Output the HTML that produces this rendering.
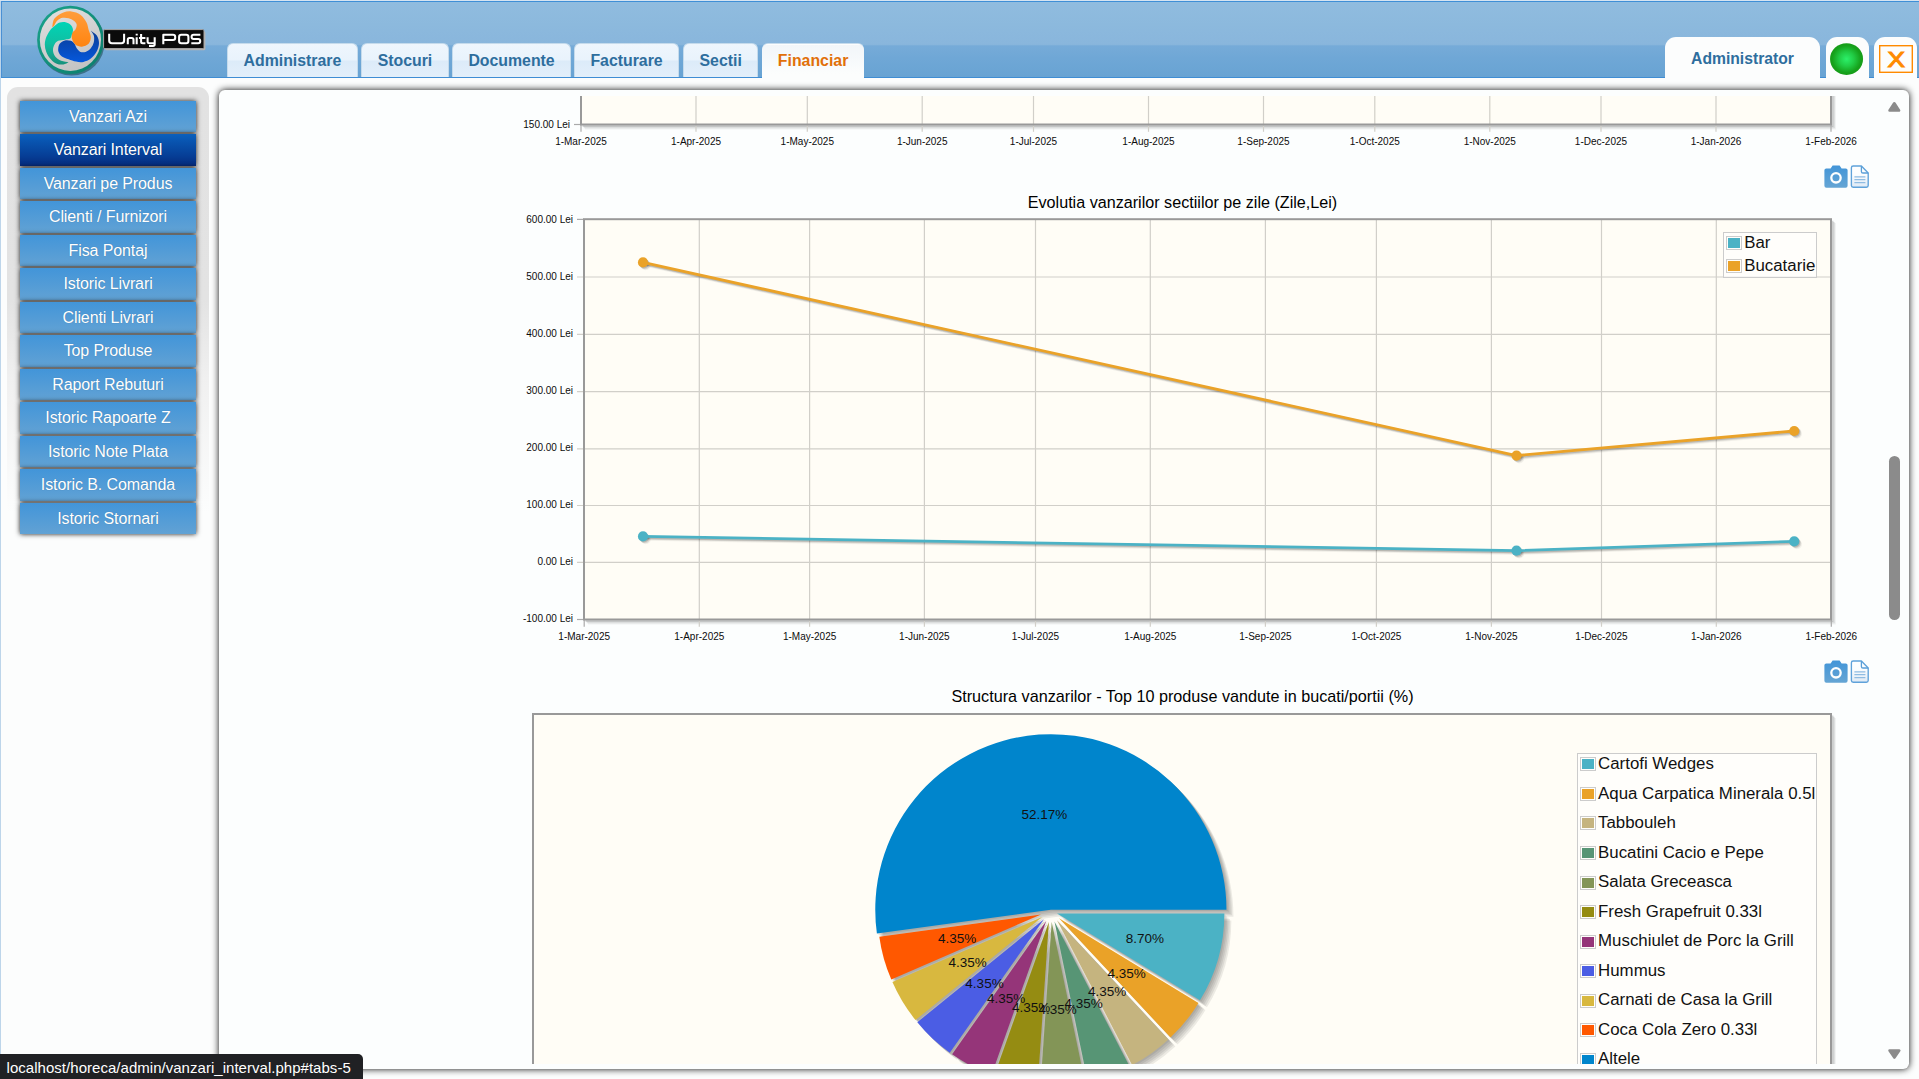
<!DOCTYPE html>
<html><head><meta charset="utf-8"><title>Unity POS</title>
<style>
html,body{margin:0;padding:0}
body{width:1919px;height:1079px;overflow:hidden;position:relative;background:#fcfdfd;font-family:"Liberation Sans", sans-serif;}
#lb{position:absolute;left:0;top:0;width:1px;height:1079px;background:#bdd5ea}
#hdr{position:absolute;left:1px;top:1px;width:1918px;height:76px;border-left:1px solid #4a90d4;border-top:1px solid #3f8fd6;box-sizing:border-box;
 background:linear-gradient(to bottom,#90bcdf 0%,#8cb9dd 30%,#89b6dc 56.5%,#76abd8 58.5%,#6fa7d6 75%,#68a3d3 100%);}
#tb{position:absolute;left:0;top:0;width:1919px;height:1px;background:#d6e4f1}
#hline{position:absolute;left:1px;top:77px;width:1918px;height:1.3px;background:#3f8dd4}
.tab{position:absolute;top:43px;height:34px;box-sizing:border-box;border:1px solid #c5dbec;border-bottom:none;border-radius:6px 6px 0 0;
 background:linear-gradient(to bottom,#eef6fd 0%,#e9f3fc 48%,#dcebf9 52%,#e3effa 100%);color:#2e6e9e;font-weight:bold;font-size:15.85px;text-align:center;line-height:33px;white-space:nowrap}
.tab.on{top:44px;background:linear-gradient(to bottom,#f2f6f9 0%,#f6f9fb 40%,#fcfdfd 85%);color:#e17009;height:34.5px;border-color:transparent;line-height:31px}
.rt{position:absolute;top:37px;height:41.5px;background:#fcfdfd;border-radius:11px 11px 0 0}
#adm{left:1665px;width:155px;color:#2e6e9e;font-weight:bold;font-size:15.7px;text-align:center;line-height:43px}
#side{position:absolute;left:7px;top:87px;width:202px;height:560px;border-radius:11px 11px 0 0;
 background:linear-gradient(to bottom,#e2e2e2 0%,#e3e3e3 38%,#f0f0f0 52%,#fcfdfd 76%)}
.sb{position:absolute;left:20px;width:176px;height:31.4px;background:linear-gradient(to bottom,#4295d9,#62a2d4);color:#fff;font-size:16px;text-align:center;line-height:31px;
 box-shadow:0 0 5px rgba(0,0,0,.9);text-shadow:0 0 1px rgba(0,0,0,.25);white-space:nowrap;letter-spacing:-0.1px}
.sb.act{background:linear-gradient(to bottom,#0a60bd,#063d95 70%,#052b7d)}
#panel{position:absolute;left:219px;top:90px;width:1690px;height:979px;background:#fcfefe;border-radius:5.8px;box-shadow:0 0 7px rgba(0,0,0,.95)}
#scroll{position:absolute;left:225px;top:96px;width:1678px;height:968px;overflow:hidden}
#scroll svg.main{position:absolute;left:-225px;top:-96px}
.tk{font-size:10px;fill:#0c0c0c;font-family:"Liberation Sans", sans-serif}
.dl{font-size:13.5px;fill:#111;font-family:"Liberation Sans", sans-serif}
.ttl{position:absolute;font-size:16.15px;color:#000;white-space:nowrap;transform:translateX(-50%)}
.leg{position:absolute;border:1px solid #ccc;background:rgba(255,255,255,.6);box-sizing:border-box}
.lr{position:absolute;left:2px;height:22px;white-space:nowrap}
.sw{position:absolute;left:-0.6px;top:3.4px;width:12px;height:10px;border:1px solid #ccc;padding:1px;background:transparent}
.sw i{display:block;width:12px;height:10px}
.lt{position:absolute;left:17.9px;top:0;font-size:16.85px;line-height:19px;color:#111}
.ico{position:absolute}
#thumb{position:absolute;left:1889px;top:456px;width:10.5px;height:164px;border-radius:5.5px;background:#8b8b8b}
#status{position:absolute;left:0;top:1054px;width:363px;height:25px;background:#202124;border-top-right-radius:5px;color:#fff;font-size:15px;line-height:27px;padding-left:6.6px;box-sizing:border-box;white-space:nowrap;letter-spacing:0.03px}
</style></head><body>
<div id="lb"></div>
<div id="hdr"></div><div id="tb"></div>
<div class="tab" style="left:227.3px;width:130.3px">Administrare</div><div class="tab" style="left:361.3px;width:87.3px">Stocuri</div><div class="tab" style="left:452.4px;width:118.3px">Documente</div><div class="tab" style="left:574.4px;width:104.3px">Facturare</div><div class="tab" style="left:683.2px;width:75.0px">Sectii</div><div class="tab" style="left:762.2px;width:101.8px">Financiar</div>
<div id="hline"></div>
<div class="tab on" style="left:762.2px;width:101.8px">Financiar</div>
<div class="rt" id="adm">Administrator</div>
<div class="rt" style="left:1826px;width:43px"></div>
<div class="rt" style="left:1874px;width:43px"></div>
<svg style="position:absolute;left:1820px;top:36px" width="99" height="44" viewBox="1820 36 99 44">
 <defs><radialGradient id="gg" cx="0.5" cy="0.5" r="0.5"><stop offset="0" stop-color="#2cf06a"/><stop offset="0.45" stop-color="#21cc45"/><stop offset="0.85" stop-color="#16a21c"/><stop offset="1" stop-color="#169c18"/></radialGradient></defs>
 <ellipse cx="1846.55" cy="59.05" rx="16.5" ry="15.9" fill="url(#gg)"/>
 <rect x="1879.7" y="45.7" width="32.6" height="26.6" fill="none" stroke="#ff8a00" stroke-width="1.4"/>
 <text x="1887.4" y="66.95" font-family='"Liberation Sans", sans-serif' font-size="22.3" fill="#ff8a00" stroke="#ff8a00" stroke-width="1.05" stroke-linejoin="miter" textLength="17.4" lengthAdjust="spacingAndGlyphs">X</text>
</svg>
<!-- logo -->
<svg style="position:absolute;left:30px;top:0" width="185" height="80" viewBox="30 0 185 80">
 <defs>
  <linearGradient id="lg1" x1="0.3" y1="0" x2="0.7" y2="1"><stop offset="0" stop-color="#dedede"/><stop offset="1" stop-color="#c2c2c2"/></linearGradient>
  <linearGradient id="rg1" x1="0" y1="0" x2="1" y2="1"><stop offset="0" stop-color="#1ba48c"/><stop offset="1" stop-color="#0a7c6b"/></linearGradient>
  <linearGradient id="og" x1="0" y1="0" x2="0" y2="1"><stop offset="0" stop-color="#ff9d3c"/><stop offset="1" stop-color="#ff8410"/></linearGradient>
  <linearGradient id="tg" x1="0" y1="0" x2="0" y2="1"><stop offset="0" stop-color="#00d4b6"/><stop offset="0.5" stop-color="#10bfa2"/><stop offset="1" stop-color="#17917c"/></linearGradient>
  <linearGradient id="bg2" x1="0" y1="0" x2="0" y2="1"><stop offset="0" stop-color="#0a3c96"/><stop offset="0.45" stop-color="#0848b4"/><stop offset="1" stop-color="#0558dc"/></linearGradient>
 </defs>
 <ellipse cx="71.6" cy="41.8" rx="33.2" ry="33.8" fill="#03342c" fill-opacity=".45"/>
 <ellipse cx="70.4" cy="39.9" rx="33.3" ry="34.2" fill="url(#rg1)"/>
 <ellipse cx="70.4" cy="39.7" rx="30.6" ry="31.2" fill="url(#lg1)"/>
 <path d="M90.80 30.40 C91.80 31.27 95.43 33.50 96.80 35.60 C98.17 37.70 99.00 40.40 99.00 43.00 C99.00 45.60 98.17 48.60 96.80 51.20 C95.43 53.80 93.03 56.82 90.80 58.60 C88.57 60.38 85.87 61.40 83.40 61.90 C80.93 62.40 78.47 62.03 76.00 61.60 C73.53 61.17 70.95 60.17 68.60 59.30 C66.25 58.43 63.52 57.50 61.90 56.40 C60.28 55.30 59.52 53.93 58.90 52.70 C58.28 51.47 58.07 50.48 58.20 49.00 C58.33 47.52 58.58 45.23 59.70 43.80 C60.82 42.37 63.05 40.90 64.90 40.40 C66.75 39.90 69.20 40.23 70.80 40.80 C72.40 41.37 73.52 42.57 74.50 43.80 C75.48 45.03 75.72 46.85 76.70 48.20 C77.68 49.55 78.92 51.28 80.40 51.90 C81.88 52.52 83.87 52.52 85.60 51.90 C87.33 51.28 89.43 49.80 90.80 48.20 C92.17 46.60 93.30 44.40 93.80 42.30 C94.30 40.20 94.30 37.58 93.80 35.60 C93.30 33.62 91.30 31.27 90.80 30.40 Z" fill="url(#bg2)"/>
 <path d="M52.30 26.70 C52.67 25.33 52.65 20.85 54.50 18.50 C56.35 16.15 60.57 13.77 63.40 12.60 C66.23 11.43 68.67 11.13 71.50 11.50 C74.33 11.87 77.92 13.00 80.40 14.80 C82.88 16.60 85.03 19.82 86.40 22.30 C87.77 24.78 87.87 27.23 88.60 29.70 C89.33 32.17 90.80 34.75 90.80 37.10 C90.80 39.45 90.08 42.20 88.60 43.80 C87.12 45.40 84.12 46.58 81.90 46.70 C79.68 46.82 76.97 45.85 75.30 44.50 C73.63 43.15 72.40 40.58 71.90 38.60 C71.40 36.62 71.73 34.08 72.30 32.60 C72.87 31.12 74.57 31.05 75.30 29.70 C76.03 28.35 76.95 25.98 76.70 24.50 C76.45 23.02 75.15 21.85 73.80 20.80 C72.45 19.75 70.47 18.70 68.60 18.20 C66.73 17.70 64.47 17.43 62.60 17.80 C60.73 18.17 58.90 18.98 57.40 20.40 C55.90 21.82 54.45 25.25 53.60 26.30 C52.75 27.35 52.52 26.63 52.30 26.70 Z" fill="url(#og)"/>
 <path d="M68.60 62.30 C67.73 62.67 65.38 64.25 63.40 64.50 C61.42 64.75 58.80 64.67 56.70 63.80 C54.60 62.93 52.53 61.28 50.80 59.30 C49.07 57.32 47.30 54.37 46.30 51.90 C45.30 49.43 44.80 46.97 44.80 44.50 C44.80 42.03 45.43 39.45 46.30 37.10 C47.17 34.75 48.63 32.25 50.00 30.40 C51.37 28.55 52.88 27.30 54.50 26.00 C56.12 24.70 57.85 23.22 59.70 22.60 C61.55 21.98 63.75 21.92 65.60 22.30 C67.45 22.68 69.57 23.67 70.80 24.90 C72.03 26.13 72.88 27.92 73.00 29.70 C73.12 31.48 71.98 34.12 71.50 35.60 C71.02 37.08 71.20 37.92 70.10 38.60 C69.00 39.28 66.88 39.33 64.90 39.70 C62.92 40.07 59.93 40.00 58.20 40.80 C56.47 41.60 55.37 42.90 54.50 44.50 C53.63 46.10 52.88 48.42 53.00 50.40 C53.12 52.38 53.83 54.67 55.20 56.40 C56.57 58.13 58.97 59.82 61.20 60.80 C63.43 61.78 67.37 62.05 68.60 62.30 Z" fill="url(#tg)"/>
 <rect x="105" y="31.2" width="100.4" height="19" rx="1.5" fill="#b4b4b4"/>
 <rect x="103.6" y="29.6" width="100.4" height="19" rx="1.2" fill="#0b0b0b" stroke="#a6a6a6" stroke-width="1"/>
 <g fill="none" stroke="#fff" stroke-width="2.05" stroke-linecap="butt" stroke-linejoin="round">
  <path d="M109.2 33.8 V40.6 Q109.2 43.3 111.9 43.3 H121.4 Q124.1 43.3 124.1 40.6 V33.8"/>
  <path d="M127.8 44.2 V39.7 Q127.8 38 129.5 38 H131.8 Q133.5 38 133.5 39.7 V44.2"/>
  <path d="M136.7 37.2 V44.2 M136.7 33.8 V35.6"/>
  <path d="M141.1 34 V41.8 Q141.1 43.3 142.7 43.3 H145.4 M139 37.9 H145.4"/>
  <path d="M147.6 37.2 V41.6 Q147.6 43.3 149.3 43.3 H154.7 M154.7 37.2 V44.3 Q154.7 46 153 46 H149"/>
  <path d="M163.3 44.2 V34.7 H173 Q175.2 34.7 175.2 36.9 V37.7 Q175.2 39.9 173 39.9 H163.3"/>
  <path d="M181.3 34.7 H186.2 Q188.4 34.7 188.4 36.9 V41.1 Q188.4 43.3 186.2 43.3 H181.3 Q179.1 43.3 179.1 41.1 V36.9 Q179.1 34.7 181.3 34.7 Z"/>
  <path d="M200.4 34.7 H193.6 Q191.6 34.7 191.6 36.7 V37 Q191.6 39 193.6 39 H198.2 Q200.2 39 200.2 41 V41.3 Q200.2 43.3 198.2 43.3 H191.3"/>
 </g>
</svg>
<div id="side"></div>
<div class="sb" style="top:100.8px">Vanzari Azi</div><div class="sb act" style="top:134.3px">Vanzari Interval</div><div class="sb" style="top:167.8px">Vanzari pe Produs</div><div class="sb" style="top:201.3px">Clienti / Furnizori</div><div class="sb" style="top:234.8px">Fisa Pontaj</div><div class="sb" style="top:268.3px">Istoric Livrari</div><div class="sb" style="top:301.8px">Clienti Livrari</div><div class="sb" style="top:335.3px">Top Produse</div><div class="sb" style="top:368.8px">Raport Rebuturi</div><div class="sb" style="top:402.3px">Istoric Rapoarte Z</div><div class="sb" style="top:435.8px">Istoric Note Plata</div><div class="sb" style="top:469.3px">Istoric B. Comanda</div><div class="sb" style="top:502.8px">Istoric Stornari</div>
<div id="panel"></div>
<div id="scroll">
<svg class="main" width="1919" height="1079" viewBox="0 0 1919 1079">
<rect x="581.0" y="90" width="1250.0" height="34.5" fill="#fffdf6"/>
<path d="M582.5 126.0 H1832.5 V90.0" fill="none" stroke="#000" stroke-opacity="0.16" stroke-width="2"/>
<path d="M583.7 127.2 H1833.7 V90.0" fill="none" stroke="#000" stroke-opacity="0.1" stroke-width="2"/>
<path d="M584.9 128.4 H1834.9 V90.0" fill="none" stroke="#000" stroke-opacity="0.05" stroke-width="2"/>
<line x1="581.0" y1="124.5" x2="581.0" y2="131.8" stroke="#aaa" stroke-width="1.2"/>
<line x1="696.0" y1="90" x2="696.0" y2="131.8" stroke="#d1cfc9" stroke-width="1.2"/>
<line x1="807.3" y1="90" x2="807.3" y2="131.8" stroke="#d1cfc9" stroke-width="1.2"/>
<line x1="922.2" y1="90" x2="922.2" y2="131.8" stroke="#d1cfc9" stroke-width="1.2"/>
<line x1="1033.5" y1="90" x2="1033.5" y2="131.8" stroke="#d1cfc9" stroke-width="1.2"/>
<line x1="1148.5" y1="90" x2="1148.5" y2="131.8" stroke="#d1cfc9" stroke-width="1.2"/>
<line x1="1263.5" y1="90" x2="1263.5" y2="131.8" stroke="#d1cfc9" stroke-width="1.2"/>
<line x1="1374.8" y1="90" x2="1374.8" y2="131.8" stroke="#d1cfc9" stroke-width="1.2"/>
<line x1="1489.8" y1="90" x2="1489.8" y2="131.8" stroke="#d1cfc9" stroke-width="1.2"/>
<line x1="1601.0" y1="90" x2="1601.0" y2="131.8" stroke="#d1cfc9" stroke-width="1.2"/>
<line x1="1716.0" y1="90" x2="1716.0" y2="131.8" stroke="#d1cfc9" stroke-width="1.2"/>
<line x1="1831.0" y1="124.5" x2="1831.0" y2="131.8" stroke="#aaa" stroke-width="1.2"/>
<line x1="574.0" y1="124.5" x2="581.0" y2="124.5" stroke="#aaa" stroke-width="1.2"/>
<path d="M581.0 90 V124.5 H1831.0 V90" fill="none" stroke="#999999" stroke-width="2"/>
<text x="581.0" y="145.15" text-anchor="middle" class="tk">1-Mar-2025</text>
<text x="696.0" y="145.15" text-anchor="middle" class="tk">1-Apr-2025</text>
<text x="807.3" y="145.15" text-anchor="middle" class="tk">1-May-2025</text>
<text x="922.2" y="145.15" text-anchor="middle" class="tk">1-Jun-2025</text>
<text x="1033.5" y="145.15" text-anchor="middle" class="tk">1-Jul-2025</text>
<text x="1148.5" y="145.15" text-anchor="middle" class="tk">1-Aug-2025</text>
<text x="1263.5" y="145.15" text-anchor="middle" class="tk">1-Sep-2025</text>
<text x="1374.8" y="145.15" text-anchor="middle" class="tk">1-Oct-2025</text>
<text x="1489.8" y="145.15" text-anchor="middle" class="tk">1-Nov-2025</text>
<text x="1601.0" y="145.15" text-anchor="middle" class="tk">1-Dec-2025</text>
<text x="1716.0" y="145.15" text-anchor="middle" class="tk">1-Jan-2026</text>
<text x="1831.0" y="145.15" text-anchor="middle" class="tk">1-Feb-2026</text>
<text x="570" y="128" text-anchor="end" class="tk">150.00 Lei</text>
<rect x="584.0" y="219.2" width="1247.0" height="400.3" fill="#fffdf6"/>
<path d="M585.5 621.0 H1832.5 V220.7" fill="none" stroke="#000" stroke-opacity="0.16" stroke-width="2"/>
<path d="M586.7 622.2 H1833.7 V221.9" fill="none" stroke="#000" stroke-opacity="0.1" stroke-width="2"/>
<path d="M587.9 623.4 H1834.9 V223.1" fill="none" stroke="#000" stroke-opacity="0.05" stroke-width="2"/>
<line x1="584.2" y1="619.5" x2="584.2" y2="626.8" stroke="#aaa" stroke-width="1.2"/>
<line x1="699.3" y1="219.2" x2="699.3" y2="626.8" stroke="#d1cfc9" stroke-width="1.2"/>
<line x1="809.6" y1="219.2" x2="809.6" y2="626.8" stroke="#d1cfc9" stroke-width="1.2"/>
<line x1="924.4" y1="219.2" x2="924.4" y2="626.8" stroke="#d1cfc9" stroke-width="1.2"/>
<line x1="1035.5" y1="219.2" x2="1035.5" y2="626.8" stroke="#d1cfc9" stroke-width="1.2"/>
<line x1="1150.3" y1="219.2" x2="1150.3" y2="626.8" stroke="#d1cfc9" stroke-width="1.2"/>
<line x1="1265.4" y1="219.2" x2="1265.4" y2="626.8" stroke="#d1cfc9" stroke-width="1.2"/>
<line x1="1376.4" y1="219.2" x2="1376.4" y2="626.8" stroke="#d1cfc9" stroke-width="1.2"/>
<line x1="1491.4" y1="219.2" x2="1491.4" y2="626.8" stroke="#d1cfc9" stroke-width="1.2"/>
<line x1="1601.5" y1="219.2" x2="1601.5" y2="626.8" stroke="#d1cfc9" stroke-width="1.2"/>
<line x1="1716.3" y1="219.2" x2="1716.3" y2="626.8" stroke="#d1cfc9" stroke-width="1.2"/>
<line x1="1831.3" y1="619.5" x2="1831.3" y2="626.8" stroke="#aaa" stroke-width="1.2"/>
<line x1="577.0" y1="219.4" x2="584.0" y2="219.4" stroke="#aaa" stroke-width="1.2"/>
<text x="573" y="222.7" text-anchor="end" class="tk">600.00 Lei</text>
<line x1="577.0" y1="277.0" x2="1831.0" y2="277.0" stroke="#d1cfc9" stroke-width="1.2"/>
<text x="573" y="279.8" text-anchor="end" class="tk">500.00 Lei</text>
<line x1="577.0" y1="334.4" x2="1831.0" y2="334.4" stroke="#d1cfc9" stroke-width="1.2"/>
<text x="573" y="336.9" text-anchor="end" class="tk">400.00 Lei</text>
<line x1="577.0" y1="391.6" x2="1831.0" y2="391.6" stroke="#d1cfc9" stroke-width="1.2"/>
<text x="573" y="394.0" text-anchor="end" class="tk">300.00 Lei</text>
<line x1="577.0" y1="448.9" x2="1831.0" y2="448.9" stroke="#d1cfc9" stroke-width="1.2"/>
<text x="573" y="451.1" text-anchor="end" class="tk">200.00 Lei</text>
<line x1="577.0" y1="505.5" x2="1831.0" y2="505.5" stroke="#d1cfc9" stroke-width="1.2"/>
<text x="573" y="508.1" text-anchor="end" class="tk">100.00 Lei</text>
<line x1="577.0" y1="562.4" x2="1831.0" y2="562.4" stroke="#d1cfc9" stroke-width="1.2"/>
<text x="573" y="565.2" text-anchor="end" class="tk">0.00 Lei</text>
<line x1="577.0" y1="619.5" x2="584.0" y2="619.5" stroke="#aaa" stroke-width="1.2"/>
<text x="573" y="622.3" text-anchor="end" class="tk">-100.00 Lei</text>
<rect x="584.0" y="219.2" width="1247.0" height="400.3" fill="none" stroke="#999999" stroke-width="2"/>
<text x="584.2" y="640.1" text-anchor="middle" class="tk">1-Mar-2025</text>
<text x="699.3" y="640.1" text-anchor="middle" class="tk">1-Apr-2025</text>
<text x="809.6" y="640.1" text-anchor="middle" class="tk">1-May-2025</text>
<text x="924.4" y="640.1" text-anchor="middle" class="tk">1-Jun-2025</text>
<text x="1035.5" y="640.1" text-anchor="middle" class="tk">1-Jul-2025</text>
<text x="1150.3" y="640.1" text-anchor="middle" class="tk">1-Aug-2025</text>
<text x="1265.4" y="640.1" text-anchor="middle" class="tk">1-Sep-2025</text>
<text x="1376.4" y="640.1" text-anchor="middle" class="tk">1-Oct-2025</text>
<text x="1491.4" y="640.1" text-anchor="middle" class="tk">1-Nov-2025</text>
<text x="1601.5" y="640.1" text-anchor="middle" class="tk">1-Dec-2025</text>
<text x="1716.3" y="640.1" text-anchor="middle" class="tk">1-Jan-2026</text>
<text x="1831.3" y="640.1" text-anchor="middle" class="tk">1-Feb-2026</text>
<path d="M643 536.45 L1516.5 550.7 L1794.2 541.4" transform="translate(1.0,1.0)" fill="none" stroke="#000" stroke-opacity="0.15" stroke-width="3" stroke-linejoin="round" stroke-linecap="round"/>
<circle cx="644.0" cy="537.45" r="5" fill="#000" fill-opacity="0.15"/>
<circle cx="1517.5" cy="551.7" r="5" fill="#000" fill-opacity="0.15"/>
<circle cx="1795.2" cy="542.4" r="5" fill="#000" fill-opacity="0.15"/>
<path d="M643 536.45 L1516.5 550.7 L1794.2 541.4" transform="translate(1.9,1.9)" fill="none" stroke="#000" stroke-opacity="0.1" stroke-width="3" stroke-linejoin="round" stroke-linecap="round"/>
<circle cx="644.9" cy="538.35" r="5" fill="#000" fill-opacity="0.1"/>
<circle cx="1518.4" cy="552.6" r="5" fill="#000" fill-opacity="0.1"/>
<circle cx="1796.1000000000001" cy="543.3" r="5" fill="#000" fill-opacity="0.1"/>
<path d="M643 536.45 L1516.5 550.7 L1794.2 541.4" transform="translate(2.8,2.8)" fill="none" stroke="#000" stroke-opacity="0.05" stroke-width="3" stroke-linejoin="round" stroke-linecap="round"/>
<circle cx="645.8" cy="539.25" r="5" fill="#000" fill-opacity="0.05"/>
<circle cx="1519.3" cy="553.5" r="5" fill="#000" fill-opacity="0.05"/>
<circle cx="1797.0" cy="544.1999999999999" r="5" fill="#000" fill-opacity="0.05"/>
<path d="M643 536.45 L1516.5 550.7 L1794.2 541.4" fill="none" stroke="#4bb2c5" stroke-width="2.8" stroke-linejoin="round" stroke-linecap="round"/>
<circle cx="643" cy="536.45" r="5.1" fill="#4bb2c5"/>
<circle cx="1516.5" cy="550.7" r="5.1" fill="#4bb2c5"/>
<circle cx="1794.2" cy="541.4" r="5.1" fill="#4bb2c5"/>
<path d="M643 262.45 L1516.5 455.6 L1794.2 431.0" transform="translate(1.0,1.0)" fill="none" stroke="#000" stroke-opacity="0.15" stroke-width="3" stroke-linejoin="round" stroke-linecap="round"/>
<circle cx="644.0" cy="263.45" r="5" fill="#000" fill-opacity="0.15"/>
<circle cx="1517.5" cy="456.6" r="5" fill="#000" fill-opacity="0.15"/>
<circle cx="1795.2" cy="432.0" r="5" fill="#000" fill-opacity="0.15"/>
<path d="M643 262.45 L1516.5 455.6 L1794.2 431.0" transform="translate(1.9,1.9)" fill="none" stroke="#000" stroke-opacity="0.1" stroke-width="3" stroke-linejoin="round" stroke-linecap="round"/>
<circle cx="644.9" cy="264.34999999999997" r="5" fill="#000" fill-opacity="0.1"/>
<circle cx="1518.4" cy="457.5" r="5" fill="#000" fill-opacity="0.1"/>
<circle cx="1796.1000000000001" cy="432.9" r="5" fill="#000" fill-opacity="0.1"/>
<path d="M643 262.45 L1516.5 455.6 L1794.2 431.0" transform="translate(2.8,2.8)" fill="none" stroke="#000" stroke-opacity="0.05" stroke-width="3" stroke-linejoin="round" stroke-linecap="round"/>
<circle cx="645.8" cy="265.25" r="5" fill="#000" fill-opacity="0.05"/>
<circle cx="1519.3" cy="458.40000000000003" r="5" fill="#000" fill-opacity="0.05"/>
<circle cx="1797.0" cy="433.8" r="5" fill="#000" fill-opacity="0.05"/>
<path d="M643 262.45 L1516.5 455.6 L1794.2 431.0" fill="none" stroke="#eaa228" stroke-width="2.8" stroke-linejoin="round" stroke-linecap="round"/>
<circle cx="643" cy="262.45" r="5.1" fill="#eaa228"/>
<circle cx="1516.5" cy="455.6" r="5.1" fill="#eaa228"/>
<circle cx="1794.2" cy="431.0" r="5.1" fill="#eaa228"/>
<rect x="533.0" y="714.0" width="1298.0" height="400" fill="#fffdf6"/>
<path d="M534.5 1121.5 H1832.5 V715.5" fill="none" stroke="#000" stroke-opacity="0.16" stroke-width="2"/>
<path d="M535.7 1122.7 H1833.7 V716.7" fill="none" stroke="#000" stroke-opacity="0.1" stroke-width="2"/>
<path d="M536.9 1123.9 H1834.9 V717.9" fill="none" stroke="#000" stroke-opacity="0.05" stroke-width="2"/>
<rect x="533.0" y="714.0" width="1298.0" height="400" fill="none" stroke="#999999" stroke-width="2"/>
<path d="M1057.03 913.39 L1224.37 913.39 A167.33 167.33 0 0 1 1200.01 1000.33 Z" transform="translate(1.4,1.4)" fill="#000" fill-opacity="0.075"/>
<path d="M1059.06 918.26 L1198.51 1003.06 A163.21 163.21 0 0 1 1170.46 1037.54 Z" transform="translate(1.4,1.4)" fill="#000" fill-opacity="0.075"/>
<path d="M1056.99 920.19 L1168.39 1039.47 A163.21 163.21 0 0 1 1132.08 1065.10 Z" transform="translate(1.4,1.4)" fill="#000" fill-opacity="0.075"/>
<path d="M1054.48 921.49 L1129.57 1066.40 A163.21 163.21 0 0 1 1087.69 1081.29 Z" transform="translate(1.4,1.4)" fill="#000" fill-opacity="0.075"/>
<path d="M1051.71 922.07 L1084.91 1081.86 A163.21 163.21 0 0 1 1040.57 1084.90 Z" transform="translate(1.4,1.4)" fill="#000" fill-opacity="0.075"/>
<path d="M1048.89 921.88 L1037.75 1084.70 A163.21 163.21 0 0 1 994.23 1075.66 Z" transform="translate(1.4,1.4)" fill="#000" fill-opacity="0.075"/>
<path d="M1046.22 920.93 L991.56 1074.71 A163.21 163.21 0 0 1 952.10 1054.26 Z" transform="translate(1.4,1.4)" fill="#000" fill-opacity="0.075"/>
<path d="M1043.91 919.30 L949.79 1052.63 A163.21 163.21 0 0 1 917.30 1022.29 Z" transform="translate(1.4,1.4)" fill="#000" fill-opacity="0.075"/>
<path d="M1042.12 917.10 L915.52 1020.10 A163.21 163.21 0 0 1 892.42 982.12 Z" transform="translate(1.4,1.4)" fill="#000" fill-opacity="0.075"/>
<path d="M1040.99 914.50 L891.30 979.53 A163.21 163.21 0 0 1 879.31 936.73 Z" transform="translate(1.4,1.4)" fill="#000" fill-opacity="0.075"/>
<path d="M1050.86 909.70 L876.89 933.61 A175.60 175.60 0 1 1 1226.47 909.70 Z" transform="translate(1.4,1.4)" fill="#000" fill-opacity="0.075"/>
<path d="M1057.03 913.39 L1224.37 913.39 A167.33 167.33 0 0 1 1200.01 1000.33 Z" transform="translate(2.8,2.8)" fill="#000" fill-opacity="0.075"/>
<path d="M1059.06 918.26 L1198.51 1003.06 A163.21 163.21 0 0 1 1170.46 1037.54 Z" transform="translate(2.8,2.8)" fill="#000" fill-opacity="0.075"/>
<path d="M1056.99 920.19 L1168.39 1039.47 A163.21 163.21 0 0 1 1132.08 1065.10 Z" transform="translate(2.8,2.8)" fill="#000" fill-opacity="0.075"/>
<path d="M1054.48 921.49 L1129.57 1066.40 A163.21 163.21 0 0 1 1087.69 1081.29 Z" transform="translate(2.8,2.8)" fill="#000" fill-opacity="0.075"/>
<path d="M1051.71 922.07 L1084.91 1081.86 A163.21 163.21 0 0 1 1040.57 1084.90 Z" transform="translate(2.8,2.8)" fill="#000" fill-opacity="0.075"/>
<path d="M1048.89 921.88 L1037.75 1084.70 A163.21 163.21 0 0 1 994.23 1075.66 Z" transform="translate(2.8,2.8)" fill="#000" fill-opacity="0.075"/>
<path d="M1046.22 920.93 L991.56 1074.71 A163.21 163.21 0 0 1 952.10 1054.26 Z" transform="translate(2.8,2.8)" fill="#000" fill-opacity="0.075"/>
<path d="M1043.91 919.30 L949.79 1052.63 A163.21 163.21 0 0 1 917.30 1022.29 Z" transform="translate(2.8,2.8)" fill="#000" fill-opacity="0.075"/>
<path d="M1042.12 917.10 L915.52 1020.10 A163.21 163.21 0 0 1 892.42 982.12 Z" transform="translate(2.8,2.8)" fill="#000" fill-opacity="0.075"/>
<path d="M1040.99 914.50 L891.30 979.53 A163.21 163.21 0 0 1 879.31 936.73 Z" transform="translate(2.8,2.8)" fill="#000" fill-opacity="0.075"/>
<path d="M1050.86 909.70 L876.89 933.61 A175.60 175.60 0 1 1 1226.47 909.70 Z" transform="translate(2.8,2.8)" fill="#000" fill-opacity="0.075"/>
<path d="M1057.03 913.39 L1224.37 913.39 A167.33 167.33 0 0 1 1200.01 1000.33 Z" transform="translate(4.2,4.2)" fill="#000" fill-opacity="0.075"/>
<path d="M1059.06 918.26 L1198.51 1003.06 A163.21 163.21 0 0 1 1170.46 1037.54 Z" transform="translate(4.2,4.2)" fill="#000" fill-opacity="0.075"/>
<path d="M1056.99 920.19 L1168.39 1039.47 A163.21 163.21 0 0 1 1132.08 1065.10 Z" transform="translate(4.2,4.2)" fill="#000" fill-opacity="0.075"/>
<path d="M1054.48 921.49 L1129.57 1066.40 A163.21 163.21 0 0 1 1087.69 1081.29 Z" transform="translate(4.2,4.2)" fill="#000" fill-opacity="0.075"/>
<path d="M1051.71 922.07 L1084.91 1081.86 A163.21 163.21 0 0 1 1040.57 1084.90 Z" transform="translate(4.2,4.2)" fill="#000" fill-opacity="0.075"/>
<path d="M1048.89 921.88 L1037.75 1084.70 A163.21 163.21 0 0 1 994.23 1075.66 Z" transform="translate(4.2,4.2)" fill="#000" fill-opacity="0.075"/>
<path d="M1046.22 920.93 L991.56 1074.71 A163.21 163.21 0 0 1 952.10 1054.26 Z" transform="translate(4.2,4.2)" fill="#000" fill-opacity="0.075"/>
<path d="M1043.91 919.30 L949.79 1052.63 A163.21 163.21 0 0 1 917.30 1022.29 Z" transform="translate(4.2,4.2)" fill="#000" fill-opacity="0.075"/>
<path d="M1042.12 917.10 L915.52 1020.10 A163.21 163.21 0 0 1 892.42 982.12 Z" transform="translate(4.2,4.2)" fill="#000" fill-opacity="0.075"/>
<path d="M1040.99 914.50 L891.30 979.53 A163.21 163.21 0 0 1 879.31 936.73 Z" transform="translate(4.2,4.2)" fill="#000" fill-opacity="0.075"/>
<path d="M1050.86 909.70 L876.89 933.61 A175.60 175.60 0 1 1 1226.47 909.70 Z" transform="translate(4.2,4.2)" fill="#000" fill-opacity="0.075"/>
<path d="M1057.03 913.39 L1224.37 913.39 A167.33 167.33 0 0 1 1200.01 1000.33 Z" transform="translate(5.6,5.6)" fill="#000" fill-opacity="0.075"/>
<path d="M1059.06 918.26 L1198.51 1003.06 A163.21 163.21 0 0 1 1170.46 1037.54 Z" transform="translate(5.6,5.6)" fill="#000" fill-opacity="0.075"/>
<path d="M1056.99 920.19 L1168.39 1039.47 A163.21 163.21 0 0 1 1132.08 1065.10 Z" transform="translate(5.6,5.6)" fill="#000" fill-opacity="0.075"/>
<path d="M1054.48 921.49 L1129.57 1066.40 A163.21 163.21 0 0 1 1087.69 1081.29 Z" transform="translate(5.6,5.6)" fill="#000" fill-opacity="0.075"/>
<path d="M1051.71 922.07 L1084.91 1081.86 A163.21 163.21 0 0 1 1040.57 1084.90 Z" transform="translate(5.6,5.6)" fill="#000" fill-opacity="0.075"/>
<path d="M1048.89 921.88 L1037.75 1084.70 A163.21 163.21 0 0 1 994.23 1075.66 Z" transform="translate(5.6,5.6)" fill="#000" fill-opacity="0.075"/>
<path d="M1046.22 920.93 L991.56 1074.71 A163.21 163.21 0 0 1 952.10 1054.26 Z" transform="translate(5.6,5.6)" fill="#000" fill-opacity="0.075"/>
<path d="M1043.91 919.30 L949.79 1052.63 A163.21 163.21 0 0 1 917.30 1022.29 Z" transform="translate(5.6,5.6)" fill="#000" fill-opacity="0.075"/>
<path d="M1042.12 917.10 L915.52 1020.10 A163.21 163.21 0 0 1 892.42 982.12 Z" transform="translate(5.6,5.6)" fill="#000" fill-opacity="0.075"/>
<path d="M1040.99 914.50 L891.30 979.53 A163.21 163.21 0 0 1 879.31 936.73 Z" transform="translate(5.6,5.6)" fill="#000" fill-opacity="0.075"/>
<path d="M1050.86 909.70 L876.89 933.61 A175.60 175.60 0 1 1 1226.47 909.70 Z" transform="translate(5.6,5.6)" fill="#000" fill-opacity="0.075"/>
<path d="M1057.03 913.39 L1224.37 913.39 A167.33 167.33 0 0 1 1200.01 1000.33 Z" transform="translate(7.0,7.0)" fill="#000" fill-opacity="0.075"/>
<path d="M1059.06 918.26 L1198.51 1003.06 A163.21 163.21 0 0 1 1170.46 1037.54 Z" transform="translate(7.0,7.0)" fill="#000" fill-opacity="0.075"/>
<path d="M1056.99 920.19 L1168.39 1039.47 A163.21 163.21 0 0 1 1132.08 1065.10 Z" transform="translate(7.0,7.0)" fill="#000" fill-opacity="0.075"/>
<path d="M1054.48 921.49 L1129.57 1066.40 A163.21 163.21 0 0 1 1087.69 1081.29 Z" transform="translate(7.0,7.0)" fill="#000" fill-opacity="0.075"/>
<path d="M1051.71 922.07 L1084.91 1081.86 A163.21 163.21 0 0 1 1040.57 1084.90 Z" transform="translate(7.0,7.0)" fill="#000" fill-opacity="0.075"/>
<path d="M1048.89 921.88 L1037.75 1084.70 A163.21 163.21 0 0 1 994.23 1075.66 Z" transform="translate(7.0,7.0)" fill="#000" fill-opacity="0.075"/>
<path d="M1046.22 920.93 L991.56 1074.71 A163.21 163.21 0 0 1 952.10 1054.26 Z" transform="translate(7.0,7.0)" fill="#000" fill-opacity="0.075"/>
<path d="M1043.91 919.30 L949.79 1052.63 A163.21 163.21 0 0 1 917.30 1022.29 Z" transform="translate(7.0,7.0)" fill="#000" fill-opacity="0.075"/>
<path d="M1042.12 917.10 L915.52 1020.10 A163.21 163.21 0 0 1 892.42 982.12 Z" transform="translate(7.0,7.0)" fill="#000" fill-opacity="0.075"/>
<path d="M1040.99 914.50 L891.30 979.53 A163.21 163.21 0 0 1 879.31 936.73 Z" transform="translate(7.0,7.0)" fill="#000" fill-opacity="0.075"/>
<path d="M1050.86 909.70 L876.89 933.61 A175.60 175.60 0 1 1 1226.47 909.70 Z" transform="translate(7.0,7.0)" fill="#000" fill-opacity="0.075"/>
<path d="M1057.03 913.39 L1224.37 913.39 A167.33 167.33 0 0 1 1200.01 1000.33 Z" fill="#4bb2c5"/>
<path d="M1059.06 918.26 L1198.51 1003.06 A163.21 163.21 0 0 1 1170.46 1037.54 Z" fill="#eaa228"/>
<path d="M1056.99 920.19 L1168.39 1039.47 A163.21 163.21 0 0 1 1132.08 1065.10 Z" fill="#c5b47f"/>
<path d="M1054.48 921.49 L1129.57 1066.40 A163.21 163.21 0 0 1 1087.69 1081.29 Z" fill="#579575"/>
<path d="M1051.71 922.07 L1084.91 1081.86 A163.21 163.21 0 0 1 1040.57 1084.90 Z" fill="#839557"/>
<path d="M1048.89 921.88 L1037.75 1084.70 A163.21 163.21 0 0 1 994.23 1075.66 Z" fill="#958c12"/>
<path d="M1046.22 920.93 L991.56 1074.71 A163.21 163.21 0 0 1 952.10 1054.26 Z" fill="#953579"/>
<path d="M1043.91 919.30 L949.79 1052.63 A163.21 163.21 0 0 1 917.30 1022.29 Z" fill="#4b5de4"/>
<path d="M1042.12 917.10 L915.52 1020.10 A163.21 163.21 0 0 1 892.42 982.12 Z" fill="#d8b83f"/>
<path d="M1040.99 914.50 L891.30 979.53 A163.21 163.21 0 0 1 879.31 936.73 Z" fill="#ff5800"/>
<path d="M1050.86 909.70 L876.89 933.61 A175.60 175.60 0 1 1 1226.47 909.70 Z" fill="#0085cc"/>
<text x="1144.9" y="942.7" text-anchor="middle" class="dl">8.70%</text>
<text x="1126.6" y="977.9" text-anchor="middle" class="dl">4.35%</text>
<text x="1107.2" y="996.1" text-anchor="middle" class="dl">4.35%</text>
<text x="1083.7" y="1008.3" text-anchor="middle" class="dl">4.35%</text>
<text x="1057.7" y="1013.7" text-anchor="middle" class="dl">4.35%</text>
<text x="1031.2" y="1011.9" text-anchor="middle" class="dl">4.35%</text>
<text x="1006.1" y="1003.0" text-anchor="middle" class="dl">4.35%</text>
<text x="984.5" y="987.7" text-anchor="middle" class="dl">4.35%</text>
<text x="967.7" y="967.1" text-anchor="middle" class="dl">4.35%</text>
<text x="957.1" y="942.7" text-anchor="middle" class="dl">4.35%</text>
<text x="1044.3" y="819.1" text-anchor="middle" class="dl">52.17%</text>
</svg>
<div class="ttl" style="left:957.5px;top:96.80000000000001px">Evolutia vanzarilor sectiilor pe zile (Zile,Lei)</div>
<div class="ttl" style="left:957.5px;top:591px;font-size:16.2px">Structura vanzarilor - Top 10 produse vandute in bucati/portii (%)</div>
<div class="leg" style="left:1498.3px;top:136.3px;width:93.5px;height:45.3px"><div class="lr" style="top:-0.3px"><span class="sw"><i style="background:#4bb2c5"></i></span><span class="lt">Bar</span></div><div class="lr" style="top:22.7px"><span class="sw"><i style="background:#eaa228"></i></span><span class="lt">Bucatarie</span></div></div>
<div class="leg" style="left:1352.2px;top:657.2px;width:240px;height:330px"><div class="lr" style="top:-0.2px"><span class="sw"><i style="background:#4bb2c5"></i></span><span class="lt">Cartofi Wedges</span></div><div class="lr" style="top:29.34px"><span class="sw"><i style="background:#eaa228"></i></span><span class="lt">Aqua Carpatica Minerala 0.5l</span></div><div class="lr" style="top:58.879999999999995px"><span class="sw"><i style="background:#c5b47f"></i></span><span class="lt">Tabbouleh</span></div><div class="lr" style="top:88.42px"><span class="sw"><i style="background:#579575"></i></span><span class="lt">Bucatini Cacio e Pepe</span></div><div class="lr" style="top:117.96px"><span class="sw"><i style="background:#839557"></i></span><span class="lt">Salata Greceasca</span></div><div class="lr" style="top:147.5px"><span class="sw"><i style="background:#958c12"></i></span><span class="lt">Fresh Grapefruit 0.33l</span></div><div class="lr" style="top:177.04000000000002px"><span class="sw"><i style="background:#953579"></i></span><span class="lt">Muschiulet de Porc la Grill</span></div><div class="lr" style="top:206.58px"><span class="sw"><i style="background:#4b5de4"></i></span><span class="lt">Hummus</span></div><div class="lr" style="top:236.12px"><span class="sw"><i style="background:#d8b83f"></i></span><span class="lt">Carnati de Casa la Grill</span></div><div class="lr" style="top:265.66px"><span class="sw"><i style="background:#ff5800"></i></span><span class="lt">Coca Cola Zero 0.33l</span></div><div class="lr" style="top:295.2px"><span class="sw"><i style="background:#0085cc"></i></span><span class="lt">Altele</span></div></div>
<svg class="ico" style="left:1599px;top:68.80000000000001px" width="46" height="24" viewBox="0 0 46 24">
<defs><linearGradient id="cg1" x1="0" y1="0" x2="0" y2="1"><stop offset="0" stop-color="#4295d8"/><stop offset="1" stop-color="#65a5d4"/></linearGradient></defs>
<path d="M2.3 3.4 H6.6 L8.6 0.4 H15.6 L17.6 3.4 H21.8 Q23.6 3.4 23.6 5.2 V20.8 Q23.6 22.8 21.6 22.8 H2.4 Q0.4 22.8 0.4 20.8 V5.2 Q0.4 3.4 2.3 3.4 Z" fill="url(#cg1)"/>
<circle cx="12" cy="12.8" r="4.7" fill="none" stroke="#fdfefe" stroke-width="2.3"/>
<defs><linearGradient id="dg1" x1="0" y1="0" x2="0" y2="1"><stop offset="0" stop-color="#ffffff"/><stop offset="0.4" stop-color="#fbfdfe"/><stop offset="1" stop-color="#dfeaf5"/></linearGradient></defs>
<path d="M29.2 1 H37.4 L44.2 8 V20.4 Q44.2 22.2 42.4 22.2 H29.2 Q27.4 22.2 27.4 20.4 V2.8 Q27.4 1 29.2 1 Z" fill="url(#dg1)" stroke="#5fa2da" stroke-width="1.35" stroke-linejoin="round"/>
<path d="M37.4 1 V6.4 Q37.4 8 39 8 H44.2" fill="none" stroke="#5a9fd8" stroke-width="1.3"/>
<path d="M30.4 11.8 H41.4 M30.4 14.7 H41.4 M30.4 17.7 H41.4" stroke="#8fbce2" stroke-width="1.3" fill="none"/>
</svg>
<svg class="ico" style="left:1599px;top:563.8px" width="46" height="24" viewBox="0 0 46 24">
<defs><linearGradient id="cg2" x1="0" y1="0" x2="0" y2="1"><stop offset="0" stop-color="#4295d8"/><stop offset="1" stop-color="#65a5d4"/></linearGradient></defs>
<path d="M2.3 3.4 H6.6 L8.6 0.4 H15.6 L17.6 3.4 H21.8 Q23.6 3.4 23.6 5.2 V20.8 Q23.6 22.8 21.6 22.8 H2.4 Q0.4 22.8 0.4 20.8 V5.2 Q0.4 3.4 2.3 3.4 Z" fill="url(#cg2)"/>
<circle cx="12" cy="12.8" r="4.7" fill="none" stroke="#fdfefe" stroke-width="2.3"/>
<defs><linearGradient id="dg2" x1="0" y1="0" x2="0" y2="1"><stop offset="0" stop-color="#ffffff"/><stop offset="0.4" stop-color="#fbfdfe"/><stop offset="1" stop-color="#dfeaf5"/></linearGradient></defs>
<path d="M29.2 1 H37.4 L44.2 8 V20.4 Q44.2 22.2 42.4 22.2 H29.2 Q27.4 22.2 27.4 20.4 V2.8 Q27.4 1 29.2 1 Z" fill="url(#dg2)" stroke="#5fa2da" stroke-width="1.35" stroke-linejoin="round"/>
<path d="M37.4 1 V6.4 Q37.4 8 39 8 H44.2" fill="none" stroke="#5a9fd8" stroke-width="1.3"/>
<path d="M30.4 11.8 H41.4 M30.4 14.7 H41.4 M30.4 17.7 H41.4" stroke="#8fbce2" stroke-width="1.3" fill="none"/>
</svg>
<svg style="position:absolute;left:1661px;top:0" width="17" height="968" viewBox="1886 96 17 968">
 <path d="M1894.3 103.3 L1899 110.5 H1889.6 Z" fill="#8b8b8b" stroke="#8b8b8b" stroke-width="2.7" stroke-linejoin="round"/>
 <path d="M1894.4 1057.5 L1899.2 1050.5 H1889.6 Z" fill="#8b8b8b" stroke="#8b8b8b" stroke-width="2.7" stroke-linejoin="round"/>
</svg>
</div>
<div id="thumb"></div>
<div id="status">localhost/horeca/admin/vanzari_interval.php#tabs-5</div>
</body></html>
